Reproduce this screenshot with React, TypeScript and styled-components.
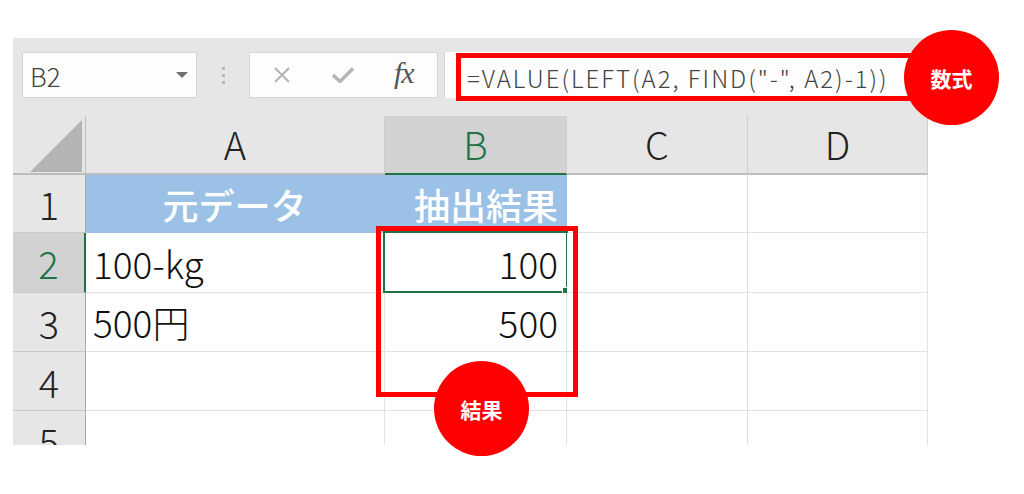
import React from "react";
import { styled, createGlobalStyle } from "styled-components";

const GlobalStyle = createGlobalStyle`
    body {
        margin: 0;
        background: #ffffff;
        font-family: "Noto Sans CJK JP", "Noto Sans", sans-serif;
    }
`;

const Page = styled.div`
    padding: 38px 0 0 13px;
    width: 1024px;
    height: 494px;
    box-sizing: border-box;
`;

const Sheet = styled.div`
    width: 915px;
    background: #e6e6e6;
`;

const Toolbar = styled.div`
    display: flex;
    align-items: flex-start;
    height: 78px;
    padding: 14px 0 0 9px;
    box-sizing: border-box;
`;

const NameBox = styled.div`
    width: 175px;
    height: 46px;
    box-sizing: border-box;
    background: #fdfdfd;
    border: 1px solid #d6d6d6;
    display: flex;
    align-items: center;
    justify-content: space-between;
    padding: 0 8px 0 7px;
    color: #444;
    font-size: 26px;
    font-weight: 300;
`;

const Caret = styled.span`
    width: 0;
    height: 0;
    border-left: 6px solid transparent;
    border-right: 6px solid transparent;
    border-top: 6px solid #6e6e6e;
`;

const Grip = styled.div`
    width: 52px;
    height: 46px;
    display: flex;
    flex-direction: column;
    align-items: center;
    justify-content: center;
    gap: 4px;

    span {
        width: 3px;
        height: 3px;
        background: #b6b6b6;
    }
`;

const ButtonBox = styled.div`
    width: 189px;
    height: 46px;
    box-sizing: border-box;
    background: #fdfdfd;
    border: 1px solid #d6d6d6;
    display: flex;
    align-items: center;
    gap: 40px;
    padding: 0 0 0 22px;

    svg {
        display: block;
    }
`;

const Fx = styled.span`
    font-family: "Liberation Serif", serif;
    font-style: italic;
    font-size: 30px;
    color: #555;
    letter-spacing: -1px;
    margin-top: -4px;
`;

const FormulaBar = styled.div`
    position: relative;
    margin-left: 6px;
    flex: 1;
    height: 46px;
    background: #fdfdfd;
    border-left: 1px solid #d6d6d6;
`;

const FormulaHighlight = styled.div`
    position: absolute;
    left: 11px;
    top: 1px;
    width: 460px;
    height: 48px;
    box-sizing: border-box;
    border: 5px solid #ff0000;
    background: #fdfdfd;
    display: flex;
    align-items: center;
    padding-left: 6px;
    color: #444;
    font-size: 24px;
    font-weight: 300;
    letter-spacing: 2px;
    white-space: nowrap;
`;

const Badge = styled.div<{ $left: number; $top: number }>`
    position: absolute;
    left: ${(p) => p.$left}px;
    top: ${(p) => p.$top}px;
    width: 95px;
    height: 95px;
    border-radius: 50%;
    background: #ff0000;
    color: #ffffff;
    font-weight: 700;
    font-size: 21px;
    display: flex;
    align-items: center;
    justify-content: center;
    z-index: 5;
`;

const SheetBody = styled.div`
    position: relative;
`;

const GridClip = styled.div`
    height: 329px;
    overflow: hidden;
`;

const Grid = styled.div`
    display: grid;
    grid-template-columns: 73px 299px 182px 181px 180px;
    grid-template-rows: 59px 58px 60px 59px 59px 59px;
    background: #ffffff;
`;

const ColHeader = styled.div<{ $active?: boolean }>`
    background: ${(p) => (p.$active ? "#d2d2d2" : "#e6e6e6")};
    color: ${(p) => (p.$active ? "#217346" : "#222")};
    border-right: 1px solid #cdcdcd;
    border-bottom: 2px solid ${(p) => (p.$active ? "#217346" : "#bdbdbd")};
    box-sizing: border-box;
    display: flex;
    align-items: center;
    justify-content: center;
    font-size: 38px;
    font-weight: 300;
    padding-bottom: 3px;
`;

const Corner = styled.div`
    background: #e6e6e6;
    border-right: 1px solid #bdbdbd;
    border-bottom: 2px solid #bdbdbd;
    box-sizing: border-box;
    display: flex;
    align-items: flex-end;
    justify-content: flex-end;
    padding: 0 3px 1px 0;

    svg {
        display: block;
    }
`;

const RowHeader = styled.div<{ $active?: boolean }>`
    background: ${(p) => (p.$active ? "#d2d2d2" : "#e6e6e6")};
    color: ${(p) => (p.$active ? "#217346" : "#222")};
    border-right: ${(p) => (p.$active ? "2px solid #217346" : "1px solid #a8a8a8")};
    border-bottom: 1px solid #c8c8c8;
    box-sizing: border-box;
    display: flex;
    align-items: center;
    justify-content: center;
    font-size: 38px;
    font-weight: 300;
`;

const Cell = styled.div<{ $align?: "left" | "center" | "right"; $fill?: boolean }>`
    position: relative;
    background: ${(p) => (p.$fill ? "#9bc2e6" : "#ffffff")};
    border-right: 1px solid ${(p) => (p.$fill ? "#9bc2e6" : "#e1e1e1")};
    border-bottom: 1px solid ${(p) => (p.$fill ? "#9bc2e6" : "#e1e1e1")};
    box-sizing: border-box;
    display: flex;
    align-items: center;
    justify-content: ${(p) =>
        p.$align === "right" ? "flex-end" : p.$align === "center" ? "center" : "flex-start"};
    padding: 0 8px 0 7px;
    font-size: 37px;
    font-weight: 300;
    color: #111;
`;

const HeadText = styled.span`
    color: #ffffff;
    font-weight: 500;
    font-size: 36px;
`;

const Selection = styled.div`
    position: absolute;
    inset: -2px -2px -1px -2px;
    border: 2px solid #217346;
    pointer-events: none;

    &::after {
        content: "";
        position: absolute;
        right: -4px;
        bottom: -4px;
        width: 6px;
        height: 6px;
        background: #217346;
        border: 1px solid #ffffff;
    }
`;

const ResultFrame = styled.div`
    position: absolute;
    left: 363px;
    top: 110px;
    width: 202px;
    height: 171px;
    box-sizing: border-box;
    border: 5px solid #ff0000;
    z-index: 4;
`;

const rows: { n: number; a: string; b: string }[] = [
    { n: 2, a: "100-kg", b: "100" },
    { n: 3, a: "500円", b: "500" },
    { n: 4, a: "", b: "" },
    { n: 5, a: "", b: "" },
];

export default function App() {
    return (
        <Page>
            <GlobalStyle />
            <Sheet>
                <Toolbar>
                    <NameBox>
                        B2
                        <Caret />
                    </NameBox>
                    <Grip>
                        <span />
                        <span />
                        <span />
                    </Grip>
                    <ButtonBox>
                        <svg width="20" height="16" viewBox="0 0 20 16">
                            <path d="M3 1 L17 15 M17 1 L3 15" stroke="#b4b4b4" strokeWidth="2" fill="none" />
                        </svg>
                        <svg width="22" height="16" viewBox="0 0 22 16">
                            <path d="M1 8 L8 14.5 L21 1.5" stroke="#b4b4b4" strokeWidth="3.5" fill="none" />
                        </svg>
                        <Fx>fx</Fx>
                    </ButtonBox>
                    <FormulaBar>
                        <FormulaHighlight>=VALUE(LEFT(A2, FIND("-", A2)-1))</FormulaHighlight>
                        <Badge $left={459} $top={-22}>数式</Badge>
                    </FormulaBar>
                </Toolbar>
                <SheetBody>
                    <GridClip>
                        <Grid>
                            <Corner>
                                <svg width="52" height="52" viewBox="0 0 52 52">
                                    <polygon points="52,0 52,52 0,52" fill="#b4b4b4" />
                                </svg>
                            </Corner>
                            <ColHeader>A</ColHeader>
                            <ColHeader $active>B</ColHeader>
                            <ColHeader>C</ColHeader>
                            <ColHeader>D</ColHeader>

                            <RowHeader>1</RowHeader>
                            <Cell $fill $align="center">
                                <HeadText>元データ</HeadText>
                            </Cell>
                            <Cell $fill $align="right">
                                <HeadText>抽出結果</HeadText>
                            </Cell>
                            <Cell />
                            <Cell />

                            {rows.map((r) => (
                                <React.Fragment key={r.n}>
                                    <RowHeader $active={r.n === 2}>{r.n}</RowHeader>
                                    <Cell>{r.a}</Cell>
                                    <Cell $align="right">
                                        {r.b}
                                        {r.n === 2 && <Selection />}
                                    </Cell>
                                    <Cell />
                                    <Cell />
                                </React.Fragment>
                            ))}
                        </Grid>
                    </GridClip>
                    <ResultFrame />
                    <Badge $left={421} $top={245}>結果</Badge>
                </SheetBody>
            </Sheet>
        </Page>
    );
}
